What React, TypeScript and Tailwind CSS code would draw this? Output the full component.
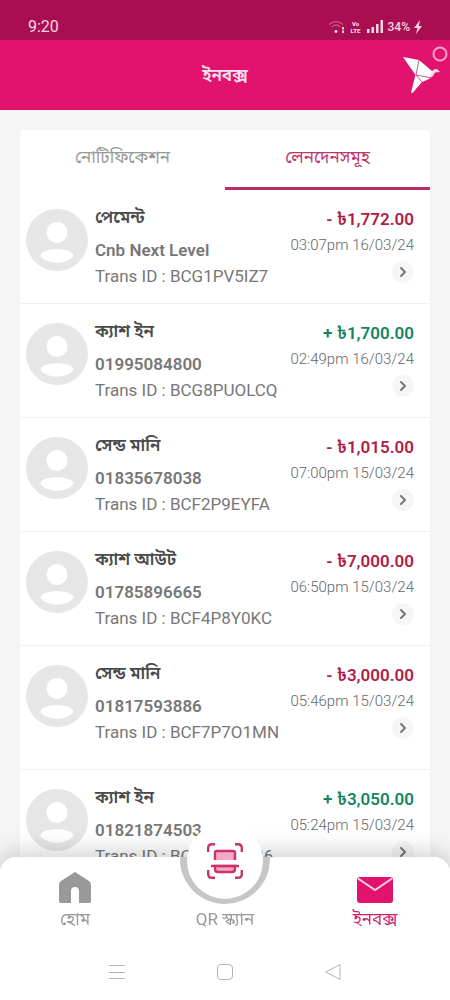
import { ChevronRight } from 'lucide-react';

type Transaction = {
  title: string;
  party: string;
  transId: string;
  amount: string;
  credit: boolean;
  time: string;
};

const transactions: Transaction[] = [
  {
    title: 'পেমেন্ট',
    party: 'Cnb Next Level',
    transId: 'BCG1PV5IZ7',
    amount: '1,772.00',
    credit: false,
    time: '03:07pm 16/03/24',
  },
  {
    title: 'ক্যাশ ইন',
    party: '01995084800',
    transId: 'BCG8PUOLCQ',
    amount: '1,700.00',
    credit: true,
    time: '02:49pm 16/03/24',
  },
  {
    title: 'সেন্ড মানি',
    party: '01835678038',
    transId: 'BCF2P9EYFA',
    amount: '1,015.00',
    credit: false,
    time: '07:00pm 15/03/24',
  },
  {
    title: 'ক্যাশ আউট',
    party: '01785896665',
    transId: 'BCF4P8Y0KC',
    amount: '7,000.00',
    credit: false,
    time: '06:50pm 15/03/24',
  },
  {
    title: 'সেন্ড মানি',
    party: '01817593886',
    transId: 'BCF7P7O1MN',
    amount: '3,000.00',
    credit: false,
    time: '05:46pm 15/03/24',
  },
  {
    title: 'ক্যাশ ইন',
    party: '01821874503',
    transId: 'BCF5P7DN86',
    amount: '3,050.00',
    credit: true,
    time: '05:24pm 15/03/24',
  },
];

function StatusBar() {
  return (
    <div className="flex h-10 shrink-0 items-end justify-between bg-[#a90f50] px-7 pb-[3px] text-[#fbd3e3]">
      <span className="text-base leading-5">9:20</span>
      <div className="flex items-center gap-1">
        <svg viewBox="0 0 18 14" className="h-3.5 w-[18px]" fill="none" stroke="currentColor">
          <path d="M1 4.5Q8 -1.5 15 4.5M3.5 7Q8 3 12.5 7" opacity="0.5" />
          <circle cx="8" cy="11.5" r="1.4" fill="currentColor" stroke="none" />
          <path d="M15 7v2.5M15 10.5V13" strokeWidth="2" />
        </svg>
        <div className="w-3 text-center text-[6px] font-black">
          <span className="block leading-[7px]">Vo</span>
          <span className="block leading-[7px]">LTE</span>
        </div>
        <svg viewBox="0 0 18 14" className="h-3.5 w-[18px]" fill="currentColor">
          <rect x="1" y="9" width="2.5" height="4" />
          <rect x="5.5" y="7" width="2.5" height="6" />
          <rect x="10" y="4" width="2.5" height="9" />
          <rect x="14.5" y="0" width="2.5" height="13" />
        </svg>
        <span className="text-xs leading-5 font-medium">34%</span>
        <svg viewBox="0 0 8 14" className="h-3.5 w-2" fill="currentColor">
          <path d="M6 0 0 8h3.4L2 14l6-8H4.8Z" />
        </svg>
      </div>
    </div>
  );
}

function Bird() {
  return (
    <svg viewBox="0 0 50 52" className="h-[52px] w-[50px]">
      <path d="M3 13 19 16 32 27 32 31 29 35 22 38 12.500 49 11 48.500 15.500 31Z" fill="#fff" />
      <path d="M31 29Q33 24.500 37 25L40 28 35 28.500 33 32 29 35Z" fill="#ffd9e8" />
      <path d="M19 16 16 31 32 34M16 31 22 38" fill="none" stroke="#a3396b" strokeWidth="0.8" />
      <circle cx="40" cy="10" r="6.500" fill="none" stroke="#f9a5ca" strokeWidth="2" />
    </svg>
  );
}

function Avatar() {
  return (
    <svg viewBox="0 0 62 62" className="size-[62px] shrink-0">
      <circle cx="31" cy="31" r="31" fill="#e6e6e6" />
      <circle cx="31" cy="23.500" r="10.500" fill="#fff" />
      <path d="M14.500 46.500C15 38 47 38 47.500 46.500C43 56 19 56 14.500 46.500Z" fill="#fff" />
    </svg>
  );
}

function TransactionRow({ item }: { item: Transaction }) {
  return (
    <li className="flex gap-[7px] border-b border-[#f0f0f0] pt-4 pr-4 pb-[14px] pl-1.5 nth-5:pb-6">
      <div className="pt-[3px]">
        <Avatar />
      </div>
      <div className="min-w-0 flex-1 whitespace-nowrap text-[#777]">
        <p className="mb-[9px] text-[17px] leading-[22px] font-semibold text-[#4a4a4a]">
          {item.title}
        </p>
        <p className="text-[17px] leading-[26px] font-semibold">{item.party}</p>
        <p className="text-[17px] leading-[26px]">Trans ID : {item.transId}</p>
      </div>
      <div className="flex shrink-0 flex-col items-end">
        <p
          className={`text-[17px] leading-[26px] font-semibold ${
            item.credit ? 'text-[#138566]' : 'text-[#b01c46]'
          }`}
        >
          {item.credit ? '+' : '-'} ৳{item.amount}
        </p>
        <p className="text-[15px] leading-[26px] font-light text-[#666]">{item.time}</p>
        <button
          aria-label="বিস্তারিত"
          className="mt-[3px] flex size-[22px] items-center justify-center rounded-full bg-[#f6f6f6] text-[#777]"
        >
          <ChevronRight size={16} strokeWidth={3} />
        </button>
      </div>
    </li>
  );
}

function ScanIcon() {
  return (
    <svg viewBox="0 0 36 36" className="size-9" fill="none" stroke="#c93369" strokeWidth="2.400">
      <path d="M1.200 9V5Q1.200 1.200 5 1.200H8M28 1.200h3q3.800 0 3.800 3.800v4M1.200 27v4q0 3.800 3.800 3.800h3M28 34.800h3q3.800 0 3.800-3.800v-4" />
      <path d="M8 17V10Q8 8 10 8H26Q28 8 28 10V17Z" fill="#f6a8c9" stroke="none" />
      <path d="M8 17V10Q8 8 10 8H26Q28 8 28 10V17" />
      <path d="M8 23V26Q8 29 11 29H25Q28 29 28 26V23Z" fill="#f6a8c9" />
      <path d="M4 23H32" />
    </svg>
  );
}

function BottomNav() {
  return (
    <nav className="fixed inset-x-0 bottom-0 rounded-t-2xl shadow-[0_-4px_24px_rgba(0,0,0,0.2)]">
      <div className="relative overflow-hidden rounded-t-2xl bg-white">
        <div className="absolute -top-[43px] left-1/2 size-[90px] -translate-x-1/2 rounded-full bg-[#c6c6c6]" />
        <div className="relative grid h-20 grid-cols-3 text-[17px] leading-6 text-[#999]">
          <a href="#home" className="flex flex-col items-center pt-[15px]">
            <svg viewBox="0 0 32 32" className="mb-[3px] size-8" fill="#999">
              <path d="M16 0 30 9Q32 10.500 32 13V29Q32 31 30 31H20V19Q20 15 16 15T12 19V31H2Q0 31 0 29V13Q0 10.500 2 9Z" />
            </svg>
            হোম
          </a>
          <a href="#scan" className="flex flex-col items-center pt-[50px]">
            QR স্ক্যান
          </a>
          <a href="#inbox" className="flex flex-col items-center pt-[15px] text-[#d0206a]">
            <svg viewBox="0 0 36 32" className="mb-[3px] h-8 w-9">
              <rect y="5" width="36" height="26" rx="3" fill="#e2136e" />
              <path d="M1 6.500 18 18 35 6.500" fill="none" stroke="#fbd3e3" strokeWidth="2" />
            </svg>
            ইনবক্স
          </a>
        </div>
        <div className="flex h-[63px] items-center justify-center gap-[92px] pt-1.5 text-[#b5b5b5]">
          <button aria-label="মেনু">
            <svg viewBox="0 0 16 16" className="size-4" fill="none" stroke="currentColor">
              <path d="M0 1.500H16M0 8.500H16M0 14.500H16" />
            </svg>
          </button>
          <button aria-label="হোম স্ক্রিন">
            <svg viewBox="0 0 16 16" className="size-4" fill="none" stroke="currentColor">
              <rect x="0.500" y="0.500" width="15" height="15" rx="3.500" />
            </svg>
          </button>
          <button aria-label="পেছনে">
            <svg viewBox="0 0 16 16" className="size-4" fill="none" stroke="currentColor">
              <path d="M15 .5V15.500L.8 8Z" strokeLinejoin="round" />
            </svg>
          </button>
        </div>
      </div>
      <button
        aria-label="QR স্ক্যান"
        className="absolute -top-[34px] left-1/2 flex size-[76px] -translate-x-1/2 items-center justify-center rounded-full bg-white"
      >
        <ScanIcon />
      </button>
    </nav>
  );
}

export default function App() {
  return (
    <div className="flex h-screen flex-col overflow-hidden bg-[#f5f5f5] font-[Roboto,'Noto_Sans_Bengali','Noto_Sans',sans-serif]">
      <StatusBar />
      <header className="relative flex h-[70px] shrink-0 items-center justify-center bg-[#e2136e]">
        <h1 className="text-[17px] leading-6 font-semibold text-[#fde3ee]">ইনবক্স</h1>
        <div className="absolute top-1 right-0">
          <Bird />
        </div>
      </header>

      <main className="min-h-0 flex-1 overflow-hidden px-5 pt-5">
        <section className="rounded bg-white shadow-xs">
          <div className="grid grid-cols-2 text-[17px] leading-6">
            <button className="border-b-3 border-transparent pt-[15px] pb-[18px] text-[#999]">
              নোটিফিকেশন
            </button>
            <button className="border-b-3 border-[#b92b67] pt-[15px] pb-[18px] text-[#bd3670]">
              লেনদেনসমূহ
            </button>
          </div>
          <ul>
            {transactions.map((item) => (
              <TransactionRow key={item.transId} item={item} />
            ))}
          </ul>
        </section>
      </main>
      <BottomNav />
    </div>
  );
}
